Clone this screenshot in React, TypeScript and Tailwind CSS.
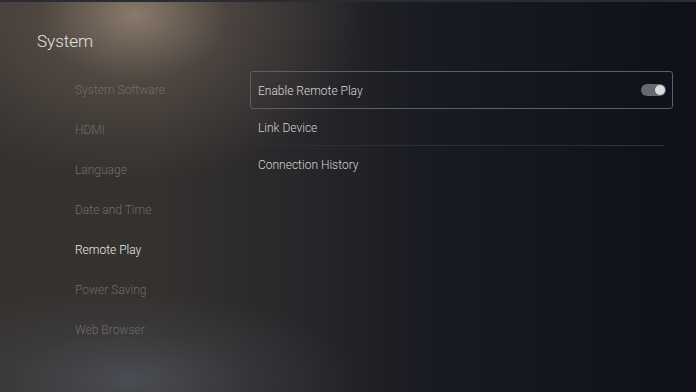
import React from "react";

const menu = [
  "System Software",
  "HDMI",
  "Language",
  "Date and Time",
  "Remote Play",
  "Power Saving",
  "Web Browser",
];

export default function App() {
  return (
    <div className="relative w-[696px] h-[392px] overflow-hidden bg-[#10131b] font-['Roboto',sans-serif] font-light">
      <div className="absolute inset-0 bg-[linear-gradient(90deg,#363230_0%,#35312f_22%,#29272a_42%,#191b22_62%,#0e111a_100%)]" />
      <div className="absolute left-[-100px] top-[-150px] w-[470px] h-[330px] rounded-full bg-[radial-gradient(closest-side,rgba(170,150,130,0.72)_0%,rgba(125,110,96,0.35)_40%,rgba(80,70,65,0)_100%)]" />
      <div className="absolute left-[-100px] top-[290px] w-[460px] h-[180px] rounded-full bg-[radial-gradient(closest-side,rgba(82,88,98,0.7)_0%,rgba(70,74,82,0.3)_55%,rgba(60,64,70,0)_100%)]" />
      <div className="absolute inset-x-0 top-0 h-[2px] bg-[#2a2c33]" />

      <div className="relative flex flex-col">
        <h1 className="h-[69px] pl-[37px] pt-[29px] text-[17px] leading-[24px] text-[#e4e2e0]">
          System
        </h1>
        <div className="flex">
          <ul className="w-[250px] pl-[75px] flex flex-col">
            {menu.map((m) => (
              <li
                key={m}
                className={
                  "h-[40px] pt-[1px] flex items-center text-[12px] " +
                  (m === "Remote Play" ? "text-[#eceae8]" : "text-[#716c69]")
                }
              >
                {m}
              </li>
            ))}
          </ul>
          <div className="w-[423px] pt-[2px] flex flex-col">
            <div className="h-[38px] border border-[#5b5f68] rounded-[3px] flex items-center justify-between pl-[7px] pr-[6px]">
              <span className="pt-[1px] text-[12px] text-[#dadada]">Enable Remote Play</span>
              <div className="w-[25px] h-[12px] rounded-full bg-[#66696f] flex items-center justify-end pr-[1px]">
                <div className="w-[10px] h-[10px] rounded-full bg-[#dcdcdc]" />
              </div>
            </div>
            <div className="ml-[8px] mr-[9px] h-[37px] pt-[1px] flex items-center border-b border-[#2c2f36] text-[12px] text-[#d4d4d4]">
              Link Device
            </div>
            <div className="ml-[8px] mr-[9px] h-[37px] pt-[1px] flex items-center text-[12px] text-[#d4d4d4]">
              Connection History
            </div>
          </div>
        </div>
      </div>
    </div>
  );
}
